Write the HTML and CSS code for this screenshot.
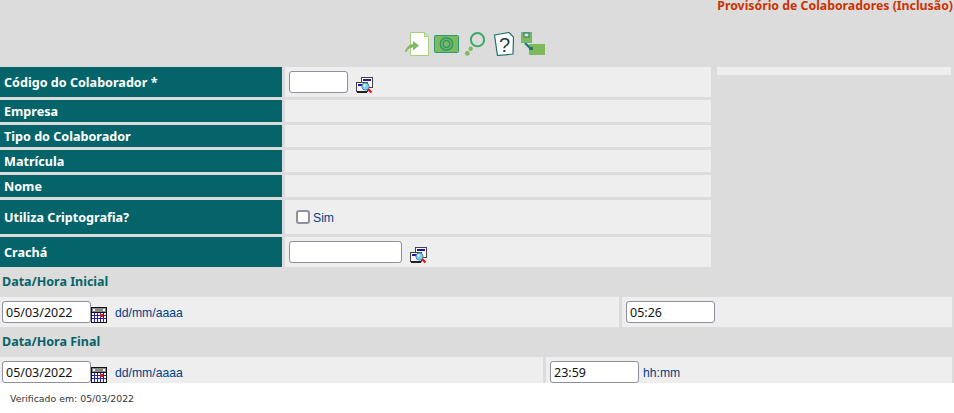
FILE: index.html
```html
<!DOCTYPE html>
<html lang="pt-BR">

<head>
    <meta charset="UTF-8">
    <title>Provisório de Colaboradores (Inclusão)</title>
    <link rel="stylesheet" href="styles.css">
</head>

<body>
    <svg class="defs" width="0" height="0">
        <symbol id="lookup" viewBox="0 0 17 17">
            <rect x="5.500" y="0.500" width="11" height="10" fill="#fff" stroke="#444"/>
            <rect x="7" y="2" width="8" height="2" fill="#1a1ab0"/>
            <rect x="0.500" y="5.500" width="11" height="9" fill="#f4f4f4" stroke="#444"/>
            <rect x="2" y="7" width="5" height="2" fill="#1a1ab0"/>
            <rect x="1" y="14" width="10" height="2" fill="#222"/>
            <circle cx="9.500" cy="9.500" r="3.600" fill="#78d0f8" stroke="#4a8aac"/>
            <circle cx="8.500" cy="8.500" r="1.300" fill="#e4f6ff"/>
            <path d="M12 12l3.500 3.500" stroke="#e01818" stroke-width="2.400"/>
        </symbol>
        <symbol id="calendar" viewBox="0 0 16 16">
            <rect x="0" y="0" width="16" height="16" fill="#111"/>
            <rect x="1" y="1" width="14" height="4" fill="#8a8a8a"/>
            <rect x="2" y="2" width="2" height="2" fill="#fff"/>
            <rect x="12" y="2" width="2" height="2" fill="#fff"/>
            <path d="M1 6h14v9H1z" fill="#fff"/>
            <path d="M3.500 6v9M6.500 6v9M9.500 6v9M12.500 6v9" stroke="#2222c0"/>
            <path d="M1 8.500h14M1 11.500h14" stroke="#2222c0"/>
            <rect x="9" y="7" width="3" height="3" fill="#e01818"/>
        </symbol>
    </svg>

    <main class="tela">
        <h1 class="titulo">Provisório de Colaboradores (Inclusão)</h1>

        <nav class="toolbar">
            <svg width="24" height="24" viewBox="1 0 24 24">
                <path d="M6.500 0.500h14l4 4v19h-18z" fill="#fff" stroke="#a6d07c"/>
                <path d="M20.500 0.500v4h4" fill="#dcdcdc" stroke="#a6d07c"/>
                <path d="M1 20c1-4 4-8 8-8V9l6 4.500-6 5v-3c-3 0-5 1-6.500 4.500z" fill="#84b860"/>
            </svg>
            <svg width="25" height="18" viewBox="0 0 25 18">
                <rect x="0.500" y="0.500" width="24" height="17" rx="1" fill="#7fb95c" stroke="#2b9a74"/>
                <circle cx="12.500" cy="9" r="6.200" fill="none" stroke="#2b9a74" stroke-width="1.500"/>
                <circle cx="12.500" cy="9" r="3.400" fill="none" stroke="#2b9a74" stroke-width="1.500"/>
            </svg>
            <svg width="21" height="24" viewBox="0 0 21 24">
                <circle cx="13.500" cy="7.700" r="6.600" fill="none" stroke="#3ea86a" stroke-width="2"/>
                <circle cx="6.700" cy="16.700" r="2.200" fill="#7fb95c"/>
                <circle cx="3.300" cy="21.300" r="2.400" fill="#7fb95c"/>
            </svg>
            <svg width="24" height="24" viewBox="-4 0 24 24">
                <path d="M0.500 3L15 0.500l4.500 4.500-0.500 17-15.500 1.500z" fill="#fff" stroke="#1f6f6a" stroke-width="1.200"/>
                <text x="5" y="20" class="tool-q">?</text>
            </svg>
            <svg width="26" height="24" viewBox="-1 0 26 24">
                <rect x="1.500" y="0.500" width="10" height="10" fill="#7fb95c" stroke="#5cb89a"/>
                <rect x="4" y="1" width="5" height="4" fill="#dcdcdc" stroke="#2b7a5c"/>
                <rect x="9" y="12" width="16" height="11" fill="#7fb95c"/>
                <path d="M5 11l6 6" stroke="#1f7a6a" stroke-width="2.200"/>
                <rect x="9" y="15" width="4" height="3" fill="#1f7a6a"/>
            </svg>
        </nav>

        <div class="topo">
            <div class="ficha">
                <div class="linha alta">
                    <div class="rotulo">Código do Colaborador *</div>
                    <div class="valor com-input">
                        <input class="campo curto" type="text">
                        <svg class="lupa" width="17" height="17"><use href="#lookup"/></svg>
                    </div>
                </div>
                <div class="linha">
                    <div class="rotulo">Empresa</div>
                    <div class="valor"></div>
                </div>
                <div class="linha">
                    <div class="rotulo">Tipo do Colaborador</div>
                    <div class="valor"></div>
                </div>
                <div class="linha">
                    <div class="rotulo">Matrícula</div>
                    <div class="valor"></div>
                </div>
                <div class="linha">
                    <div class="rotulo">Nome</div>
                    <div class="valor"></div>
                </div>
                <div class="linha media">
                    <div class="rotulo">Utiliza Criptografia?</div>
                    <div class="valor opcao">
                        <input class="marca" type="checkbox" id="sim">
                        <label class="dica" for="sim">Sim</label>
                    </div>
                </div>
                <div class="linha alta">
                    <div class="rotulo">Crachá</div>
                    <div class="valor com-input">
                        <input class="campo longo" type="text">
                        <svg class="lupa" width="17" height="17"><use href="#lookup"/></svg>
                    </div>
                </div>
            </div>
            <div class="lateral"></div>
        </div>

        <h2 class="secao">Data/Hora Inicial</h2>
        <div class="datas inicial">
            <div class="celula">
                <input class="campo data" type="text" value="05/03/2022">
                <svg class="cal" width="16" height="16"><use href="#calendar"/></svg>
                <span class="dica formato">dd/mm/aaaa</span>
            </div>
            <div class="celula hora">
                <input class="campo data" type="text" value="05:26">
            </div>
        </div>

        <h2 class="secao">Data/Hora Final</h2>
        <div class="datas final">
            <div class="celula">
                <input class="campo data" type="text" value="05/03/2022">
                <svg class="cal" width="16" height="16"><use href="#calendar"/></svg>
                <span class="dica formato">dd/mm/aaaa</span>
            </div>
            <div class="celula hora">
                <input class="campo data" type="text" value="23:59">
                <span class="dica">hh:mm</span>
            </div>
        </div>
    </main>

    <footer class="rodape">Verificado em: 05/03/2022</footer>
</body>

</html>
```

FILE: styles.css
```css
html,
body {
    margin: 0;
    padding: 0;
    height: 100%;
    overflow: hidden;
    background-color: #fff;
}

body {
    font-family: "Noto Sans", sans-serif;
    font-size: 12px;
}

.defs {
    display: block;
    height: 0;
}

.tela {
    height: 383px;
    overflow: hidden;
    background-color: #dcdcdc;
}

.titulo {
    margin: 0;
    height: 26px;
    padding-right: 1px;
    text-align: right;
    font-size: 12.3px;
    line-height: 12px;
    font-weight: bold;
    color: #cc3300;
}

.toolbar {
    height: 24px;
    margin: 6px 0 11px;
    padding-left: 405px;
    display: flex;
    align-items: center;
    gap: 5px;
}

.tool-q {
    font-family: "Liberation Sans", sans-serif;
    font-size: 20px;
    fill: #1d3f3f;
}

.topo {
    display: flex;
    align-items: flex-start;
    gap: 6px;
}

.ficha {
    width: 711px;
    display: flex;
    flex-direction: column;
    gap: 3px;
}

.linha {
    display: flex;
    gap: 3px;
    height: 22px;
}

.alta {
    height: 30px;
}

.media {
    height: 34px;
}

.rotulo {
    width: 282px;
    box-sizing: border-box;
    padding-left: 4px;
    display: flex;
    align-items: center;
    background-color: #05646a;
    color: #fff;
    font-size: 12.6px;
    font-weight: bold;
}

.valor {
    flex: 1;
    background-color: #eeeeee;
}

.com-input {
    display: flex;
    align-items: center;
    padding-left: 4px;
}

.opcao {
    display: flex;
    align-items: center;
    padding-left: 11px;
}

.lateral {
    width: 234px;
    height: 8px;
    background-color: #eeeeee;
}

.campo {
    box-sizing: border-box;
    height: 22px;
    margin: 0;
    padding: 0 3px;
    border: 1px solid #8f8f9d;
    border-radius: 3px;
    background-color: #fff;
    color: #111;
    font-family: "Noto Sans", sans-serif;
    font-size: 12.5px;
}

.curto {
    width: 59px;
}

.longo {
    width: 113px;
}

.data {
    width: 89px;
}

.lupa {
    margin: 6px 0 0 8px;
}

.cal {
    margin-top: 6px;
    flex: none;
}

.marca {
    appearance: none;
    box-sizing: border-box;
    width: 14px;
    height: 14px;
    margin: 0 3px 0 0;
    border: 2px solid #8f8f9d;
    border-radius: 3px;
    background-color: #fff;
}

.dica {
    padding-top: 2px;
    color: #003f87;
    font-family: "Liberation Sans", sans-serif;
    font-size: 12.2px;
}

.formato {
    margin-left: 8px;
}

.secao {
    margin: 0;
    box-sizing: border-box;
    height: 30px;
    padding: 0 0 2px 2px;
    display: flex;
    align-items: center;
    font-size: 12.5px;
    font-weight: bold;
    color: #05646a;
}

.datas {
    display: grid;
    gap: 3px;
    width: 952px;
    height: 30px;
}

.inicial {
    grid-template-columns: 619px 1fr;
}

.final {
    grid-template-columns: 543px 1fr;
}

.celula {
    background-color: #eeeeee;
    display: flex;
    align-items: center;
    padding-left: 2px;
}

.hora {
    padding-left: 4px;
    gap: 4px;
}

.rodape {
    padding: 10px 0 0 10px;
    font-family: "DejaVu Sans", sans-serif;
    font-size: 9.35px;
    line-height: 11px;
    color: #333;
}
```
